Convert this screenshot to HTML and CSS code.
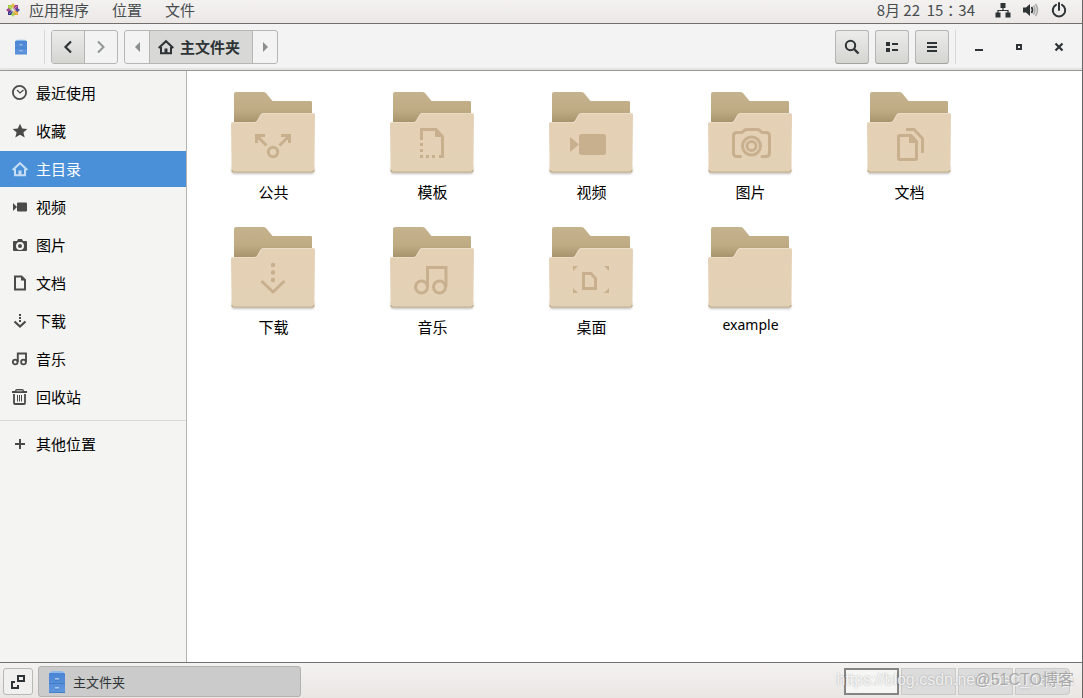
FILE: index.html
```html
<!DOCTYPE html>
<html lang="zh-CN">
<head>
<meta charset="utf-8">
<title>主文件夹</title>
<link rel="stylesheet" href="styles.css">
</head>
<body>
<svg class="defs" aria-hidden="true">
  <defs>
    <linearGradient id="back" x1="0" y1="0" x2="0" y2="1"><stop offset="0" stop-color="#c5b38f"/><stop offset=".6" stop-color="#bfab83"/><stop offset="1" stop-color="#a5926b"/></linearGradient>
    <linearGradient id="front" x1="0" y1="0" x2="0" y2="1"><stop offset="0" stop-color="#e4d0b5"/><stop offset="1" stop-color="#e3d1b6"/></linearGradient>
    <linearGradient id="blue" x1="0" y1="0" x2="0" y2="1"><stop offset="0" stop-color="#4a84d4"/><stop offset="1" stop-color="#5f97df"/></linearGradient>
    <filter id="soft" x="-20%" y="-100%" width="140%" height="300%"><feGaussianBlur stdDeviation="1.3"/></filter>
    <symbol id="folder" viewBox="0 0 96 96">
      <rect x="7" y="81" width="82" height="8" rx="2" fill="#000" opacity=".25" filter="url(#soft)"/>
      <path d="M9 38V9q0-2 2-2h27q2 0 3 1l6.500 8H86q1 0 1 1.500V38z" fill="url(#back)"/>
      <path d="M6 39q0-2 2-2h21.500q1.500 0 2.500-1.500l3.500-6q1-1.500 2.500-1.500H88q2 0 2 2l-.6 55.500q0 2-2 2H8.600q-2 0-2-2z" fill="url(#front)"/>
      <path d="M7 85q0 2 2 2h78q2 0 2-2" fill="none" stroke="#c3ad8e" stroke-width="1.200"/>
      <path d="M7 38.500q0-1 1-1h22q1.500 0 2.500-1.500l3.500-6q1-1.500 2-1.500H88q1.500 0 1.500 1.500" fill="none" stroke="#eadcc7"/>
    </symbol>
    <symbol id="home" viewBox="0 0 16 16"><path d="M.7 9 8 2.200 15.300 9M3 8v6.200h10V8" fill="none" stroke="currentColor" stroke-width="2"/><path d="M6.500 9.500h3V14h-3z" fill="currentColor"/></symbol>
    <symbol id="cabinet" viewBox="0 0 16 24" preserveAspectRatio="none">
      <path d="M1 3q0-2 3-2h8q3 0 3 2l1 3H0z" fill="#8fb9e8"/>
      <rect y="3" width="16" height="20" rx="1" fill="url(#blue)"/><path d="M0 13.500h16M0 22.500h16" stroke="#3f78c0" stroke-width=".8"/><path d="M6 9h4M6 18h4" stroke="#fff" stroke-width="1.200"/><path d="M6 10h4M6 19h4" stroke="#3567a8" stroke-width=".6"/>
    </symbol>
  </defs>
</svg>

<header class="panel">
  <nav class="menus">
    <button class="menu first"><svg width="14" height="14" viewBox="0 0 14 14"><rect x="2" y="2" width="4.500" height="4.500" fill="#a2cb3c"/><rect x="7.500" y="2" width="4.500" height="4.500" fill="#9a3d88"/><rect x="2" y="7.500" width="4.500" height="4.500" fill="#35358c"/><rect x="7.500" y="7.500" width="4.500" height="4.500" fill="#e8a532"/><path d="M7 0 9 2.500 7 5 5 2.500z" fill="#e9b84b"/><path d="M14 7 11.500 9 9 7l2.500-2z" fill="#4c4ca0"/><path d="M0 7 2.500 5 5 7 2.500 9z" fill="#a04893"/><path d="M7 14 5 11.500 7 9l2 2.500z" fill="#acd05a"/><path d="M3 3l8 8M11 3l-8 8" stroke="#f5efe8" stroke-width=".5"/></svg><span>应用程序</span></button>
    <button class="menu">位置</button>
    <button class="menu">文件</button>
  </nav>
  <div class="status">
    <time lang="zh-TW">8月 22&nbsp; 15：34</time>
    <button class="tray" aria-label="网络"><svg width="16" height="16" viewBox="0 0 16 16"><path d="M5.500 1h5v5h-5zM.5 10.500h5v5h-5zM10.500 10.500h5v5h-5z" fill="#2e3436"/><path d="M8 5v3.500M3 11V8.500h10V11" fill="none" stroke="#2e3436" stroke-width="1.200"/></svg></button>
    <button class="tray" aria-label="音量"><svg width="16" height="16" viewBox="0 0 16 16"><path d="M0 5.500h3L7 2v12l-4-3.500H0z" fill="#2e3436"/><path d="M8.500 5q2 3 0 6" fill="none" stroke="#2e3436" stroke-width="1.700"/><path d="M10.500 3.500q3 4.500 0 9M12.500 2q4 6 0 12" fill="none" stroke="#aaa" stroke-width="1.600"/></svg></button>
    <button class="tray" aria-label="电源"><svg width="16" height="16" viewBox="0 0 16 16"><path d="M5 2.800a6.200 6.200 0 1 0 6 0M8 1v7" fill="none" stroke="#2e3436" stroke-width="2" stroke-linecap="round"/></svg></button>
  </div>
</header>

<section class="toolbar">
  <svg class="app" width="12" height="16"><use href="#cabinet" width="12" height="16"/></svg>
  <i class="rule"></i>
  <div class="group">
    <button class="back" aria-label="后退"><svg width="16" height="16" viewBox="0 0 16 16"><path d="M11 2.500 5.500 8l5.500 5.500" fill="none" stroke="#2e3436" stroke-width="2.200"/></svg></button>
    <button class="forward" aria-label="前进" disabled><svg width="16" height="16" viewBox="0 0 16 16"><path d="M5 2.500 10.500 8 5 13.500" fill="none" stroke="#919494" stroke-width="2"/></svg></button>
  </div>
  <div class="group path">
    <button class="step" aria-label="向左"><svg width="5" height="10" viewBox="0 0 5 10"><path d="M5 0v10L0 5z" fill="#8b8e8f"/></svg></button>
    <button class="crumb"><svg width="16" height="16"><use href="#home"/></svg>主文件夹</button>
    <button class="step" aria-label="向右"><svg width="5" height="10" viewBox="0 0 5 10"><path d="M0 0v10l5-5z" fill="#8b8e8f"/></svg></button>
  </div>
  <div class="actions">
    <button class="tool" aria-label="搜索"><svg width="16" height="16" viewBox="0 0 16 16"><circle cx="6.500" cy="6.500" r="4.700" fill="none" stroke="#2e3436" stroke-width="2"/><path d="m10 10 4.500 4.500" stroke="#2e3436" stroke-width="2.400"/></svg></button>
    <button class="tool" aria-label="列表视图"><svg width="16" height="16" viewBox="0 0 16 16"><path d="M2 3h4v4H2zM2 9h4v4H2zM8 4h6v2H8zM8 10h6v2H8z" fill="#2e3436"/></svg></button>
    <button class="tool" aria-label="菜单"><svg width="16" height="16" viewBox="0 0 16 16"><path d="M3 3h10v2H3zM3 7h10v2H3zM3 11h10v2H3z" fill="#2e3436"/></svg></button>
  </div>
  <i class="rule"></i>
  <div class="window">
    <button aria-label="最小化"><svg width="16" height="16" viewBox="0 0 16 16"><path d="M4 10h8v2H4z" fill="#2e3436"/></svg></button>
    <button aria-label="还原"><svg width="16" height="16" viewBox="0 0 16 16"><path d="M6 6h4v4H6z" fill="none" stroke="#2e3436" stroke-width="2"/></svg></button>
    <button aria-label="关闭"><svg width="16" height="16" viewBox="0 0 16 16"><path d="m4.500 4.500 7 7M11.500 4.500l-7 7" stroke="#2e3436" stroke-width="2.200"/></svg></button>
  </div>
</section>

<main class="content">
  <nav class="sidebar">
    <a class="place" href="#"><svg width="16" height="16" viewBox="0 0 16 16"><circle cx="7.500" cy="7.500" r="6.600" fill="none" stroke="currentColor" stroke-width="1.800"/><path d="M5 5l3 3 3.500-3" fill="none" stroke="currentColor" stroke-width="1.200"/></svg>最近使用</a>
    <a class="place" href="#"><svg width="16" height="16" viewBox="0 0 16 16"><path d="m8 .7 2.200 4.800 5.100.5-3.900 3.400 1.300 5.100L8 11.800l-4.700 2.700 1.300-5.100L.7 6l5.100-.5z" fill="currentColor"/></svg>收藏</a>
    <a class="place active" href="#"><svg width="16" height="16"><use href="#home"/></svg>主目录</a>
    <a class="place" href="#"><svg width="16" height="16" viewBox="0 0 16 16"><rect x="5" y="3.500" width="10" height="9" rx="1" fill="currentColor"/><path d="M1 4v8l4-4z" fill="currentColor"/></svg>视频</a>
    <a class="place" href="#"><svg width="16" height="16" viewBox="0 0 16 16"><path d="M2 4h3l1-2h4l1 2h3q1 0 1 1v8q0 1-1 1H2q-1 0-1-1V5q0-1 1-1z" fill="currentColor"/><circle cx="8" cy="9" r="3" fill="none" stroke="#f4f4f2" stroke-width="2"/></svg>图片</a>
    <a class="place" href="#"><svg width="16" height="16" viewBox="0 0 16 16"><path d="M3 1.500h6.500L13 5v9.500H3z" fill="none" stroke="currentColor" stroke-width="2"/><path d="M9 1v4.500h4.500z" fill="currentColor"/></svg>文档</a>
    <a class="place" href="#"><svg width="16" height="16" viewBox="0 0 16 16"><path d="M7 1h2v2H7zM7 4h2v2H7zM7 7h2v2H7z" fill="currentColor"/><path d="m2.500 8.500 5.500 5 5.500-5" fill="none" stroke="currentColor" stroke-width="2.200"/></svg>下载</a>
    <a class="place" href="#"><svg width="16" height="16" viewBox="0 0 16 16"><circle cx="3.200" cy="11" r="2.400" fill="none" stroke="currentColor" stroke-width="1.800"/><circle cx="11.500" cy="11" r="2.400" fill="none" stroke="currentColor" stroke-width="1.800"/><path d="M5.800 11V2.500H14V11" fill="none" stroke="currentColor" stroke-width="1.900"/></svg>音乐</a>
    <a class="place" href="#"><svg width="16" height="16" viewBox="0 0 16 16"><path d="M0 2h3q0-2 2-2h5q2 0 2 2h3v2H0z" fill="currentColor"/><path d="M4.500 1.800h6" stroke="#f4f4f2" stroke-width=".8"/><path d="M2 5v9q0 1 1 1h9q1 0 1-1V5" fill="none" stroke="currentColor" stroke-width="1.800"/><path d="M5.500 6v6.500M7.500 6v6.500M9.500 6v6.500" stroke="currentColor"/></svg>回收站</a>
    <hr>
    <a class="place" href="#"><svg width="16" height="16" viewBox="0 0 16 16"><path d="M8 3v10M3 8h10" stroke="currentColor" stroke-width="2"/></svg>其他位置</a>
  </nav>
  <ul class="files">
    <li><svg class="icon" viewBox="0 0 96 96"><use href="#folder"/><g class="mark"><path d="M31.500 58v-7.500H40M32 51l9.500 9.500M64.500 58v-7.500H56M64 51l-9.500 9.500"/><circle cx="48" cy="67" r="4.700"/></g></svg><span>公共</span></li>
    <li><svg class="icon" viewBox="0 0 96 96"><use href="#folder"/><g class="mark"><path d="M37.500 55V44.500H52l6.500 7v20H55"/><path class="fill" d="M51 43v9h9zM36 58h3v3h-3zM36 64h3v3h-3zM36 70h3v3h-3zM42 70h3v3h-3zM48 70h3v3h-3z"/></g></svg><span>模板</span></li>
    <li><svg class="icon" viewBox="0 0 96 96"><use href="#folder"/><g class="mark"><rect class="fill" x="36" y="49" width="27" height="21" rx="2.500"/><path class="fill" d="M27 52v15l9-7.500z"/></g></svg><span>视频</span></li>
    <li><svg class="icon" viewBox="0 0 96 96"><use href="#folder"/><g class="mark"><path d="M38.500 71.500H35q-3.500 0-3.500-3.500V51q0-3.500 3.500-3.500h5l3-2.500q.7-.5 1.500-.5h11q.8 0 1.500.5l3 2.500h4q3.500 0 3.500 3.500v17q0 3.500-3.500 3.500h-4" stroke-linecap="round"/><circle cx="49.500" cy="61" r="9"/><circle cx="49.500" cy="61" r="4.500"/></g></svg><span>图片</span></li>
    <li><svg class="icon" viewBox="0 0 96 96"><use href="#folder"/><g class="mark"><path d="M38.500 50.500H50l5.500 6v17q0 1-1 1h-16q-1 0-1-1v-22q0-1 1-1zM45 44.500h8l8.500 9V68"/><path class="fill" d="M48 50v8h8z"/></g></svg><span>文档</span></li>
    <li><svg class="icon" viewBox="0 0 96 96"><use href="#folder"/><g class="mark"><circle class="fill" cx="48" cy="45" r="2.200"/><circle class="fill" cx="48" cy="52.500" r="2.200"/><circle class="fill" cx="48" cy="60" r="2.200"/><path d="m36.500 61 11.500 11 11.500-11" stroke-linejoin="miter"/></g></svg><span>下载</span></li>
    <li><svg class="icon" viewBox="0 0 96 96"><use href="#folder"/><g class="mark"><circle cx="37.500" cy="67" r="6"/><circle cx="55.500" cy="67" r="6"/><path d="M43.500 67V47.500H62V67"/></g></svg><span>音乐</span></li>
    <li><svg class="icon" viewBox="0 0 96 96"><use href="#folder"/><g class="mark"><path d="M40.500 53.500H48l4.500 5v10H40.500z"/><path class="fill" d="M30 46h5l-5 5zM66 46h-5l5 5zM30 73h5l-5-5zM66 73h-5l5-5z"/></g></svg><span>桌面</span></li>
    <li><svg class="icon" viewBox="0 0 96 96"><use href="#folder"/></svg><span class="latin">example</span></li>
  </ul>
</main>

<footer class="taskbar">
  <button class="desktop" aria-label="显示桌面"><svg width="16" height="16" viewBox="0 0 16 16"><path d="M8 2h6v5H8z" fill="none" stroke="#2e3436" stroke-width="2"/><path d="M5 8H2v6h6v-3" fill="none" stroke="#2e3436" stroke-width="2"/></svg></button>
  <button class="task"><svg width="16" height="24"><use href="#cabinet" width="16" height="24"/></svg>主文件夹</button>
  <div class="spaces">
    <button class="space current" aria-label="工作区 1"></button>
    <button class="space" aria-label="工作区 2"></button>
    <button class="space" aria-label="工作区 3"></button>
    <button class="space" aria-label="工作区 4"></button>
  </div>
  <span class="mark-url">https://blog.csdn.net/ubert_nahua</span>
  <span class="mark-site">@51CTO博客</span>
</footer>
</body>
</html>
```
FILE: styles.css
```css
* { box-sizing: border-box; }
body {
  margin: 0;
  min-height: 100vh;
  display: flex;
  flex-direction: column;
  border-right: 1px solid #666;
  background: #fff;
  color: #000;
  font: 15px/22px "Noto Sans CJK SC", sans-serif;
}
button {
  display: flex;
  align-items: center;
  justify-content: center;
  margin: 0;
  padding: 0;
  border: 0;
  background: none;
  color: #2e3436;
  font: inherit;
}
svg { flex: none; display: block; }
.defs { position: absolute; width: 0; height: 0; }

.panel {
  display: flex;
  justify-content: space-between;
  align-items: center;
  height: 24px;
  padding: 0 15px 3px 6px;
  border-bottom: 1px solid #716e6b;
  background: linear-gradient(#f4f2f1, #ebe8e6);
}
.menus { display: flex; gap: 23px; }
.menu { gap: 9px; color: #474c4e; }
.status { display: flex; align-items: center; }
.status time { margin-right: 20px; color: #474c4e; font-family: "Noto Sans CJK TC", sans-serif; }
.tray + .tray { margin-left: 12px; }

.toolbar {
  display: flex;
  align-items: center;
  height: 47px;
  padding: 0 4px 0 15px;
  border-bottom: 1px solid #979793;
  background: #f3f3f3;
  box-shadow: inset 0 -2px 1px #e4e4e1;
}
.rule { width: 1px; height: 34px; background: #d9d9d7; }
.app + .rule { margin: 0 6px 0 17px; }
.group {
  display: flex;
  height: 34px;
  margin-right: 6px;
  border: 1px solid #b6b6b3;
  border-radius: 3px;
  overflow: hidden;
}
.back { width: 33px; border-right: 1px solid #b6b6b3; background: linear-gradient(#ececea, #d4d4d1); }
.forward { width: 32px; }
.step { width: 24px; }
.crumb {
  gap: 6px;
  padding: 0 12px 0 8px;
  border: solid #b6b6b3;
  border-width: 0 1px;
  background: #d8d8d6;
  font-weight: 700;
}
.actions { display: flex; gap: 6px; margin: 0 6px 0 auto; }
.tool {
  width: 34px;
  height: 34px;
  border: 1px solid #b6b6b3;
  border-bottom-color: #a1a19d;
  border-radius: 3px;
  background: linear-gradient(#ececea, #d4d4d1);
}
.window { display: flex; gap: 16px; padding: 0 7px 0 11px; }
.window button { width: 24px; height: 24px; }

.content { flex: 1; display: flex; }
.sidebar {
  display: flex;
  flex-direction: column;
  gap: 2px;
  width: 187px;
  padding-top: 4px;
  border-right: 1px solid #b4b4b1;
  background: #f4f4f2;
}
.place {
  display: flex;
  align-items: center;
  gap: 8px;
  height: 36px;
  padding-left: 12px;
  color: #000;
  text-decoration: none;
}
.place svg { color: #4a4a49; }
.place.active { background: #4a90d9; color: #fff; }
.place.active svg { color: #c7ddf4; }
.sidebar hr { width: 100%; margin: 3px 0; border: 0; border-top: 1px solid #d8d8d5; }

.files {
  flex: 1;
  display: grid;
  grid-template-columns: repeat(auto-fill, 159px);
  align-content: start;
  row-gap: 15px;
  margin: 0;
  padding: 14px 0 0 7px;
  list-style: none;
}
.files li { display: flex; flex-direction: column; align-items: center; height: 120px; }
.files span { line-height: 22px; }
.files .latin { font-family: "Noto Sans", sans-serif; font-size: 14px; line-height: 18px; }
.icon { width: 96px; height: 96px; margin-right: 1px; }
.mark { fill: none; stroke: #c8b08f; stroke-width: 3; }
.mark .fill { fill: #c8b08f; stroke: none; }

.taskbar {
  position: relative;
  display: flex;
  align-items: center;
  height: 36px;
  padding: 2px 12px 0 3px;
  border-top: 1px solid #73716f;
  background: linear-gradient(#f4f2f1, #e9e6e3);
}
.desktop {
  width: 30px;
  height: 27px;
  margin-right: 5px;
  border: 1px solid #b8b8b5;
  border-radius: 3px;
  background: #f0f0ef;
}
.task {
  justify-content: flex-start;
  gap: 8px;
  width: 263px;
  height: 31px;
  padding-left: 10px;
  border: 1px solid #b2b2b0;
  border-radius: 3px;
  background: #cbcbcb;
  font-size: 13px;
}
.spaces { display: flex; gap: 2px; margin-left: auto; }
.space { width: 55px; height: 27px; border: 1px solid #cacac8; background: #dcdcdc; }
.space:last-child { border-radius: 0 4px 4px 0; }
.space.current { border: 2px solid #858583; background: #f6f6f4; }
.mark-url, .mark-site { position: absolute; top: 6px; right: 8px; font-size: 16px; pointer-events: none; white-space: nowrap; }
.mark-url { color: rgba(255, 255, 255, .8); font-family: "Liberation Sans", sans-serif; text-shadow: 0 0 2px rgba(0, 0, 0, .3); }
.mark-site { color: rgba(150, 150, 150, .75); font-family: "Liberation Sans", "Noto Sans CJK SC", sans-serif; text-shadow: 1px 1px 0 rgba(255, 255, 255, .6); }
```
